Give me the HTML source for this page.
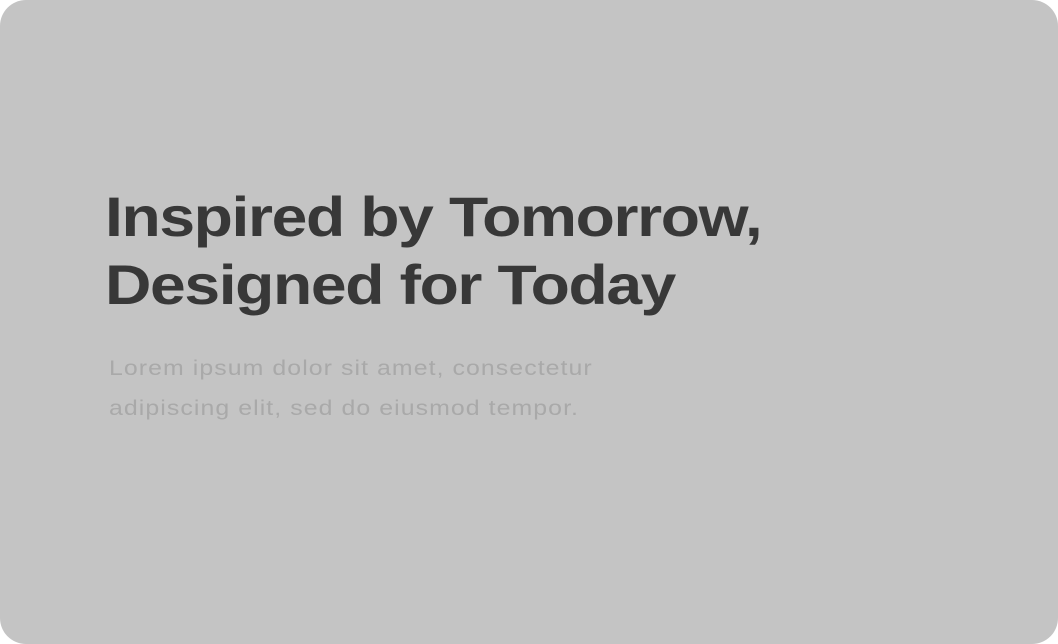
<!DOCTYPE html>
<html><head><meta charset="utf-8"><style>
html,body{margin:0;padding:0;background:#fff;}
.card{position:absolute;left:0;top:0;width:1058px;height:644px;background:#c4c4c4;border-radius:26px;overflow:hidden;}
h1{position:absolute;left:105px;top:183px;margin:0;font:bold 56px/68px "Liberation Sans",sans-serif;color:#383838;letter-spacing:-1.2px;white-space:nowrap;transform:scaleX(1.147);transform-origin:0 0;}
p{position:absolute;left:109px;top:349px;margin:0;font:21px/40px "Liberation Sans",sans-serif;color:#a9a9a9;letter-spacing:0.9px;white-space:nowrap;transform:scaleX(1.184);transform-origin:0 0;}
</style></head><body>
<div class="card">
<h1>Inspired by Tomorrow,<br>Designed for Today</h1>
<p>Lorem ipsum dolor sit amet, consectetur<br>adipiscing elit, sed do eiusmod tempor.</p>
</div>
</body></html>
